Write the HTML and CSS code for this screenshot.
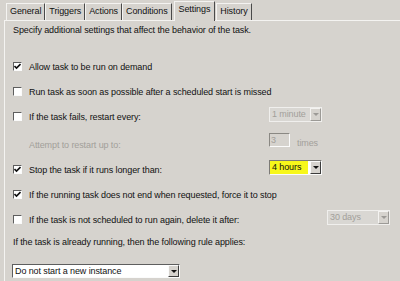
FILE: index.html
```html
<!DOCTYPE html>
<html lang="en">
<head>
    <meta charset="UTF-8">
    <title>Task Properties - Settings</title>
    <link rel="stylesheet" href="styles.css">
</head>
<body>
    <div class="tabs">
        <div class="tab">General</div>
        <div class="tab">Triggers</div>
        <div class="tab">Actions</div>
        <div class="tab">Conditions</div>
        <div class="tab active">Settings</div>
        <div class="tab">History</div>
    </div>

    <div class="panel">
        <p class="intro">Specify additional settings that affect the behavior of the task.</p>

        <div class="options">
            <div class="row">
                <span class="check on"><svg viewBox="0 0 7 7"><path d="M0.5 3 L2.5 5 L6.5 1" /></svg></span>
                <span class="label">Allow task to be run on demand</span>
            </div>
            <div class="row">
                <span class="check"></span>
                <span class="label">Run task as soon as possible after a scheduled start is missed</span>
            </div>
            <div class="row">
                <span class="check"></span>
                <span class="label wide">If the task fails, restart every:</span>
                <div class="combo disabled short lift">
                    <span class="value">1 minute</span>
                    <span class="arrow"></span>
                </div>
            </div>
            <div class="row attempt">
                <span class="label wide muted">Attempt to restart up to:</span>
                <div class="textbox">3</div>
                <span class="muted times">times</span>
            </div>
            <div class="row">
                <span class="check on"><svg viewBox="0 0 7 7"><path d="M0.5 3 L2.5 5 L6.5 1" /></svg></span>
                <span class="label wide">Stop the task if it runs longer than:</span>
                <div class="combo short lift">
                    <span class="value marked">4 hours</span>
                    <span class="arrow"></span>
                </div>
            </div>
            <div class="row">
                <span class="check on"><svg viewBox="0 0 7 7"><path d="M0.5 3 L2.5 5 L6.5 1" /></svg></span>
                <span class="label">If the running task does not end when requested, force it to stop</span>
            </div>
            <div class="row">
                <span class="check"></span>
                <span class="label wider">If the task is not scheduled to run again, delete it after:</span>
                <div class="combo disabled days lift">
                    <span class="value">30 days</span>
                    <span class="arrow"></span>
                </div>
            </div>
            <div class="row rule">
                <span>If the task is already running, then the following rule applies:</span>
            </div>
        </div>

        <div class="combo instance">
            <span class="value">Do not start a new instance</span>
            <span class="arrow"></span>
        </div>
    </div>
</body>
</html>
```

FILE: styles.css
```css
* {
    margin: 0;
    padding: 0;
    box-sizing: border-box;
    font-family: "Liberation Sans", Arial, sans-serif;
}

body {
    background: #d6d3ce;
    color: #111;
    font-size: 9px;
    letter-spacing: -0.1px;
    width: 400px;
    height: 281px;
    overflow: hidden;
}

/* tab strip */
.tabs {
    display: flex;
    align-items: flex-end;
    height: 20px;
    padding-left: 6px;
}

.tab {
    height: 17px;
    line-height: 15px;
    padding: 0 3px;
    border: 1px solid;
    border-bottom: none;
    border-color: #f4f3f1 #4a4a4a transparent #f4f3f1;
}

.tab.active {
    position: relative;
    height: 20px;
    line-height: 15px;
    margin: 0 1px 0 2px;
    padding: 0 4px;
    margin-bottom: -1px;
    background: #d6d3ce;
}

/* settings page */
.panel {
    margin-left: 4px;
    height: 261px;
    border-top: 1px solid #f4f3f1;
    border-left: 1px solid #f4f3f1;
    padding: 3px 0 0 8px;
}

.intro {
    line-height: 12px;
}

.options {
    margin-top: 18px;
}

.row {
    display: flex;
    align-items: center;
    height: 25px;
}

.row.attempt {
    margin-top: 3px;
    padding-left: 16px;
}

.row.rule {
    height: 20px;
}

.check {
    width: 9px;
    height: 9px;
    flex-shrink: 0;
    background: #fff;
    border: 1px solid;
    border-color: #5e5e5e #fbfbfb #fbfbfb #5e5e5e;
    display: flex;
    align-items: center;
    justify-content: center;
}

.check svg {
    width: 7px;
    height: 7px;
}

.check svg path {
    fill: none;
    stroke: #111;
    stroke-width: 1.6;
}

.label {
    margin-left: 7px;
    white-space: nowrap;
}

.label.wide {
    width: 240px;
    flex-shrink: 0;
}

.label.wider {
    width: 298px;
    flex-shrink: 0;
}

.row.attempt .label {
    margin-left: 0;
}

.muted {
    color: #a29f9a;
}

.times {
    margin-left: 7px;
    margin-top: -3px;
}

.textbox {
    width: 21px;
    height: 14px;
    margin-bottom: 9px;
    border: 1px solid;
    border-color: #8a8883 #fbfbfb #fbfbfb #8a8883;
    color: #a29f9a;
    line-height: 12px;
    padding-left: 1px;
}

/* drop-down lists */
.combo {
    display: flex;
    height: 15px;
    background: #fff;
    border: 1px solid;
    border-color: #7c7a76 #fbfbfb #fbfbfb #7c7a76;
}

.combo .value {
    flex: 1;
    line-height: 13px;
    padding-left: 2px;
    white-space: nowrap;
}

.combo .value.marked {
    background: #f7f71a;
    margin-right: 2px;
}

.combo .arrow {
    width: 11px;
    background: #d6d3ce;
    border: 1px solid;
    border-color: #fbfbfb #3c3c3c #3c3c3c #fbfbfb;
    display: flex;
    align-items: center;
    justify-content: center;
}

.combo .arrow::after {
    content: "";
    border-left: 3px solid transparent;
    border-right: 3px solid transparent;
    border-top: 3px solid #111;
}

.combo.disabled {
    background: #d9d7d3;
    border-color: #f0efed;
    color: #a29f9a;
}

.combo.disabled .arrow {
    border-color: #f4f3f1 #9c9a96 #9c9a96 #f4f3f1;
}

.combo.disabled .arrow::after {
    border-top-color: #9c9a96;
}

.combo.short {
    width: 53px;
}

.combo.days {
    width: 63px;
}

.combo.lift {
    margin-bottom: 4px;
}

.combo.instance {
    width: 168px;
    height: 14px;
    margin: 12px 0 0 -1px;
    border-color: #5e5e5e #fbfbfb #fbfbfb #5e5e5e;
}

.combo.instance .value {
    line-height: 12px;
}
```
